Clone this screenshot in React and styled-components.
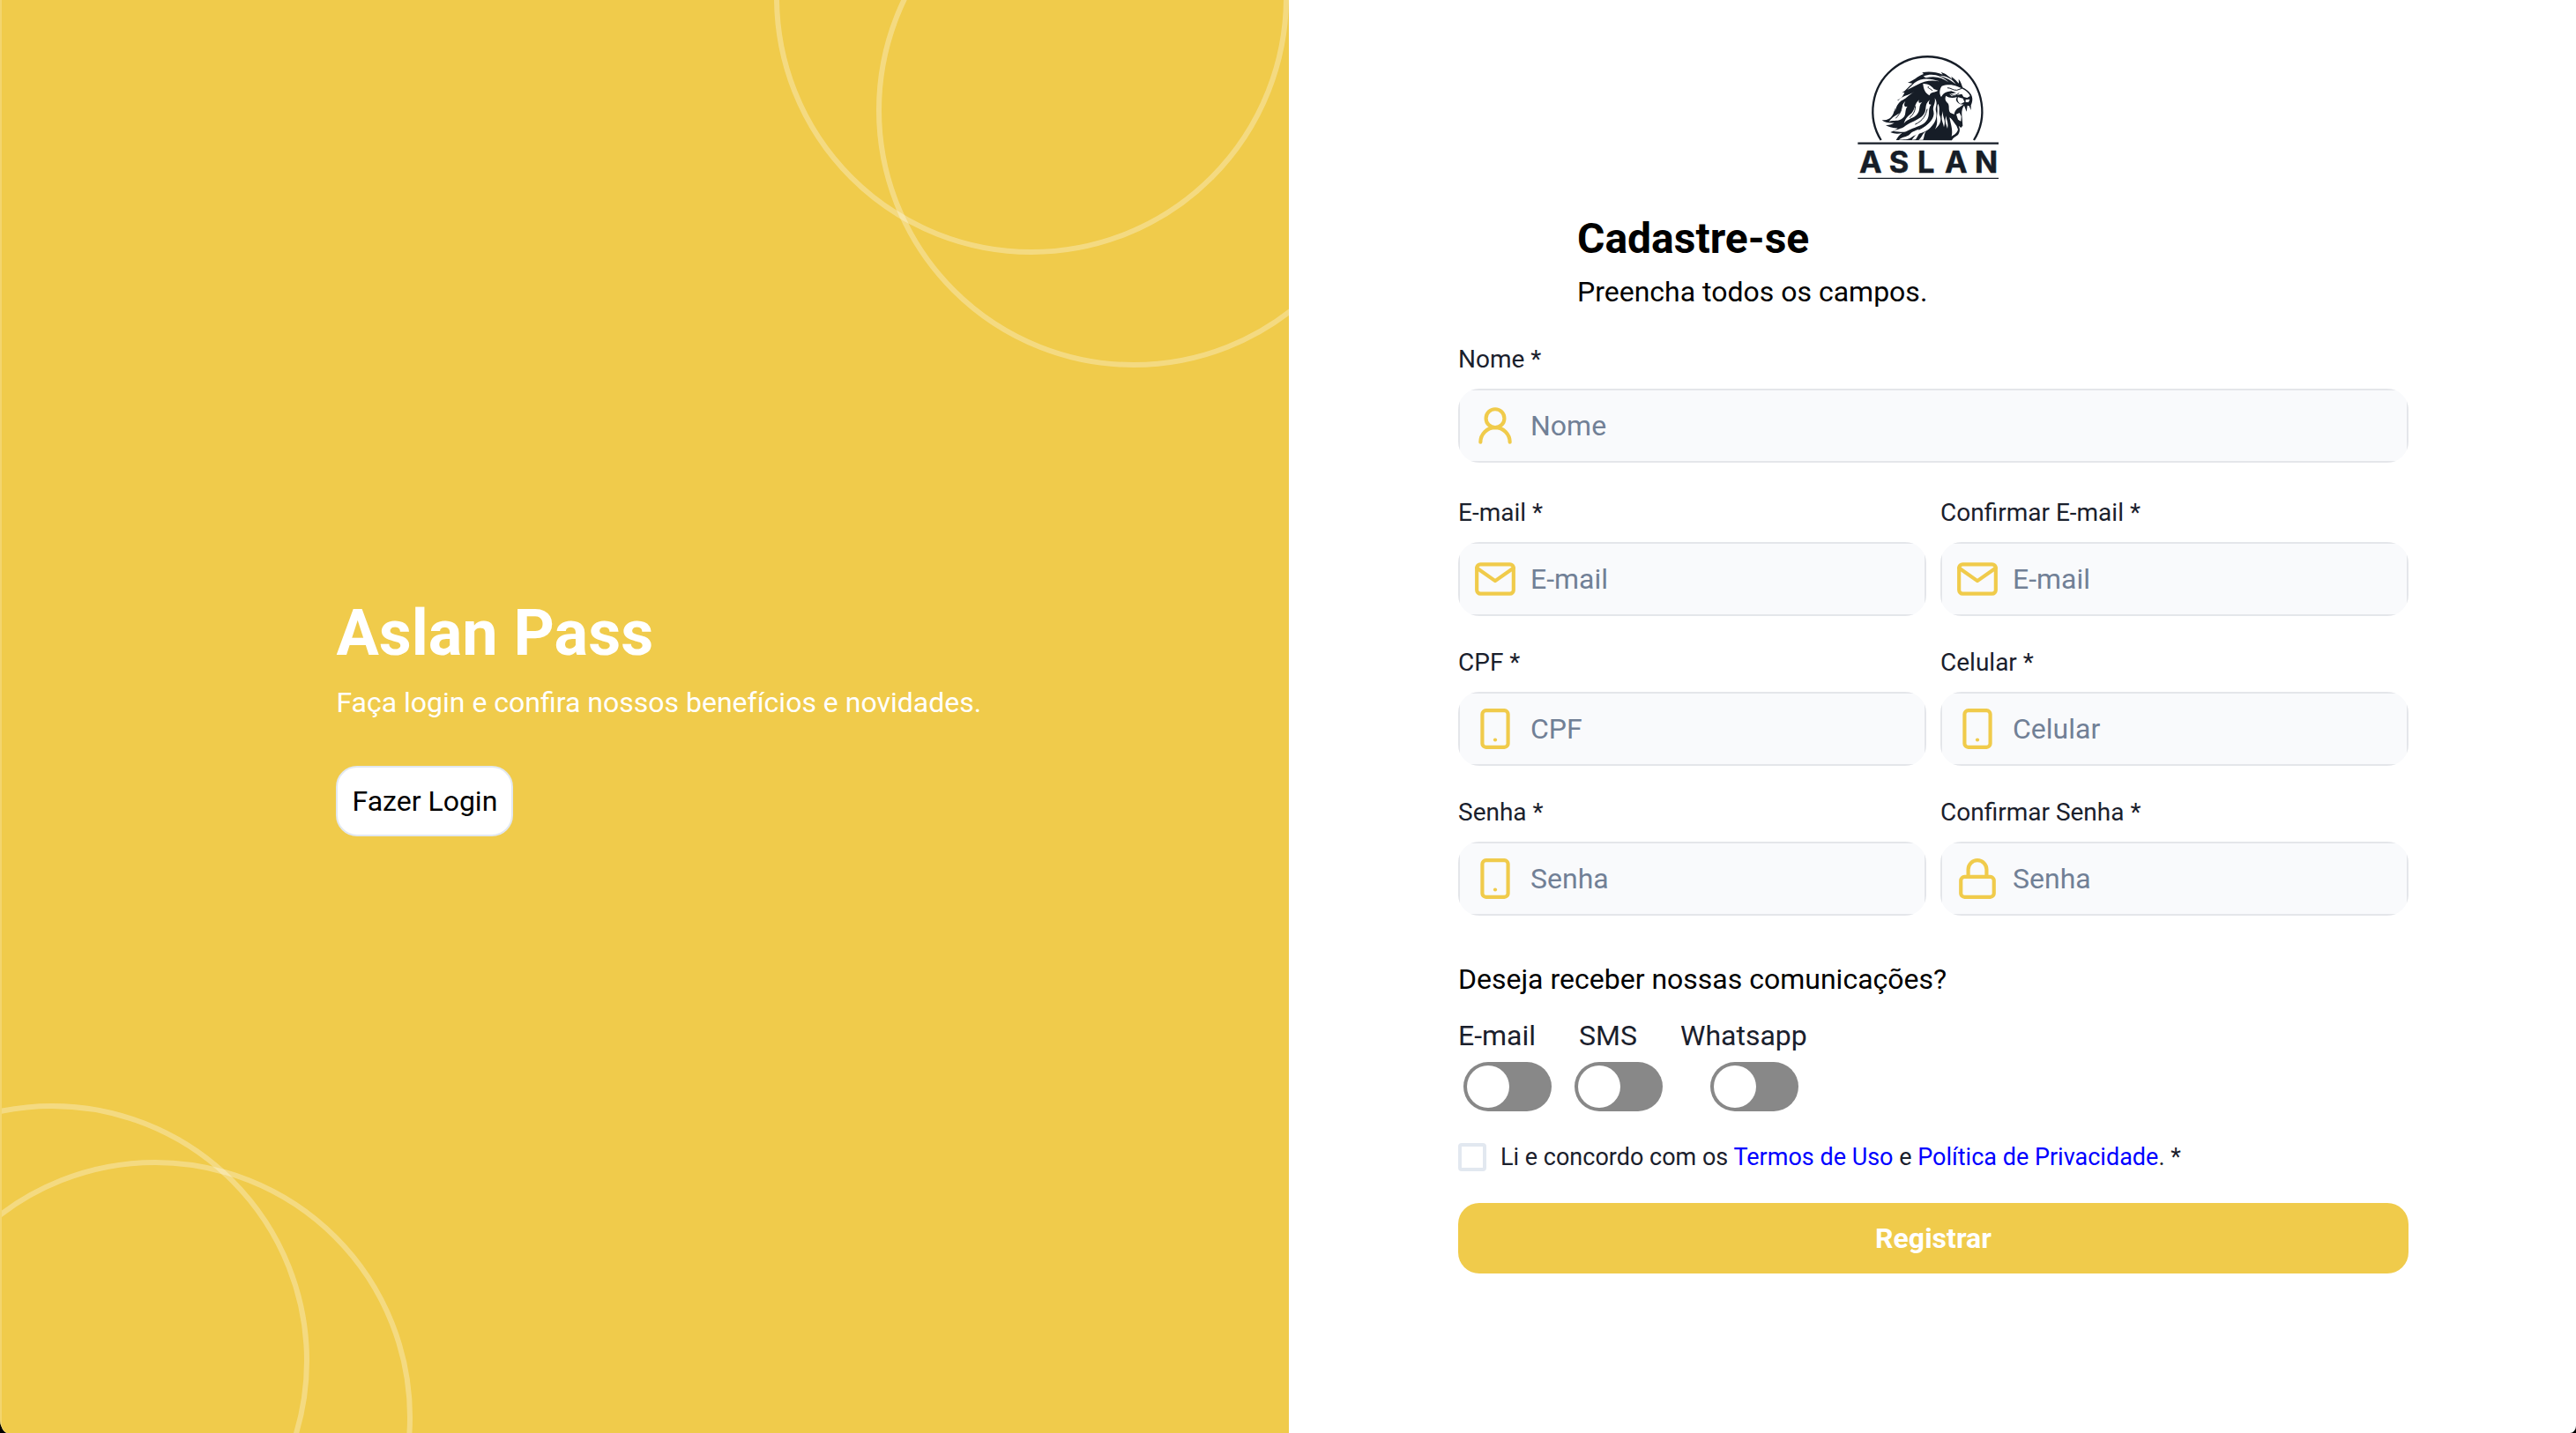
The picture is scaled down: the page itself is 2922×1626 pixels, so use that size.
import React from "react";
import styled, { createGlobalStyle } from "styled-components";
import { FiMail, FiSmartphone, FiLock } from "react-icons/fi";
import { UserRound } from "lucide-react";

const GlobalStyle = createGlobalStyle`
  *, *::before, *::after { box-sizing: border-box; }
  html, body { margin: 0; padding: 0; background: #000; }
  body { font-family: Roboto, "Liberation Sans", sans-serif; color: #1a202c; font-size: 32px; }
  h1, h2, p { margin: 0; }
`;

const Page = styled.main`
  display: grid;
  grid-template-columns: 1462px 1fr;
  width: 2922px;
  height: 1626px;
  overflow: hidden;
  border-radius: 0 0 7px 9px / 0 0 8px 17px;
  background: #fff;
`;

const Hero = styled.section`
  position: relative;
  overflow: hidden;
  background: #f0cb4b;
  border-left: 2px solid #f3d56e;
  padding: 677px 0 0 379.4px;
`;

const Ring = styled.span`
  position: absolute;
  width: 584px;
  height: 584px;
  border: 6px solid rgba(255, 255, 255, 0.3);
  border-radius: 50%;
  left: ${(p) => p.$cx - 294}px;
  top: ${(p) => p.$cy - 292}px;
`;

const HeroTitle = styled.h1`
  color: #fff;
  font-size: 72px;
  font-weight: 700;
  line-height: 84px;
`;

const HeroText = styled.p`
  color: #fff;
  line-height: 38px;
  margin-top: 17px;
`;

const LoginButton = styled.button`
  display: block;
  width: 201px;
  height: 80px;
  margin-top: 53px;
  padding: 0;
  border: 2px solid #e2e8f0;
  border-radius: 24px;
  background: #fff;
  color: #000;
  font: inherit;
`;

const Panel = styled.section`
  display: flex;
  flex-direction: column;
  padding: 62px 190px 0 192px;
`;

const Logo = styled.svg`
  width: 164px;
  height: 144px;
  margin-left: 452px;
`;

const Heading = styled.h2`
  margin: 37px 0 0 135px;
  color: #000;
  font-size: 48px;
  font-weight: 700;
  line-height: 56px;
`;

const Subheading = styled.p`
  margin: 13px 0 0 135px;
  color: #000;
  line-height: 38px;
`;

const FieldGrid = styled.div`
  display: grid;
  grid-template-columns: 531px 531px;
  column-gap: 16px;
  row-gap: 36px;
  margin-top: 41px;
`;

const Field = styled.label`
  display: flex;
  flex-direction: column;
  grid-column: ${(p) => (p.$wide ? "1 / -1" : "auto")};
  margin-bottom: ${(p) => (p.$wide ? "4px" : "0")};
`;

const FieldLabel = styled.span`
  font-size: 28px;
  line-height: 34px;
  margin-bottom: 16px;
`;

const InputShell = styled.span`
  display: block;
  height: 84px;
  border-radius: 24px;
  overflow: hidden;
`;

const InputBox = styled.span`
  display: flex;
  align-items: center;
  height: 100%;
  padding-left: 15px;
  border: 2px solid #e4e6ea;
  background: #f9fafc;
  color: #f0cb4b;
`;

const Input = styled.input`
  flex: 1;
  min-width: 0;
  height: 100%;
  margin: 0 0 0 15px;
  padding: 0;
  border: 0;
  outline: 0;
  background: transparent;
  font: inherit;
  color: #1a202c;
  &::placeholder { color: #718096; opacity: 1; }
`;

const Question = styled.p`
  margin-top: 53px;
  color: #000;
  line-height: 38px;
`;

const SwitchRow = styled.div`
  display: flex;
  margin-top: 26px;
`;

const SwitchItem = styled.div`
  display: flex;
  flex-direction: column;
  width: ${(p) => p.$width}px;
  padding-left: ${(p) => p.$indent || 0}px;
`;

const SwitchLabel = styled.span`
  line-height: 38px;
  margin-bottom: 11px;
`;

const Track = styled.button`
  display: flex;
  width: 100px;
  height: 56px;
  margin: 0 0 0 ${(p) => p.$shift}px;
  padding: 4px;
  border: 0;
  border-radius: 28px;
  background: #888;
`;

const Knob = styled.span`
  width: 48px;
  height: 48px;
  border-radius: 50%;
  background: #fff;
`;

const Consent = styled.label`
  display: flex;
  align-items: center;
  gap: 16px;
  height: 32px;
  margin-top: 36px;
  font-size: 27px;
  white-space: pre;
`;

const Checkbox = styled.span`
  width: 32px;
  height: 32px;
  border: 4px solid #e2e8f0;
  border-radius: 4px;
`;

const Link = styled.a`
  color: #00f;
  text-decoration: none;
`;

const Submit = styled.button`
  height: 80px;
  margin-top: 36px;
  padding: 0;
  border: 0;
  border-radius: 24px;
  background: #f0cb4b;
  color: #fff;
  font: inherit;
  font-weight: 700;
`;

const icons = {
  user: <UserRound size={50} strokeWidth={2} />,
  mail: <FiMail size={50} />,
  phone: <FiSmartphone size={50} />,
  lock: <FiLock size={50} />,
};

const fields = [
  { label: "Nome *", hint: "Nome", icon: "user", wide: true },
  { label: "E-mail *", hint: "E-mail", icon: "mail" },
  { label: "Confirmar E-mail *", hint: "E-mail", icon: "mail" },
  { label: "CPF *", hint: "CPF", icon: "phone" },
  { label: "Celular *", hint: "Celular", icon: "phone" },
  { label: "Senha *", hint: "Senha", icon: "phone" },
  { label: "Confirmar Senha *", hint: "Senha", icon: "lock" },
];

const switches = [
  { label: "E-mail", width: 132, indent: 0, shift: 6 },
  { label: "SMS", width: 120, indent: 5, shift: -5 },
  { label: "Whatsapp", width: 150, indent: 0, shift: 34 },
];

// Drawn in thirds of a pixel: the viewBox is three times the rendered size.
function AslanLogo() {
  return (
    <Logo viewBox="80 36 492 432" role="img" aria-label="Aslan">
      <g fill="none" stroke="#161d27">
        <path d="M163 327A186 186 0 1 1 479 327" strokeWidth="7" />
        <path d="M84 338H563" strokeWidth="7" />
        <path d="M84 457H563" strokeWidth="4" />
      </g>
      <path
        fill="#161d27"
        d="M166 259C186 260 198 252 205 236C211 220 214 208 225 197L219 190C232 185 238 178 243 164L234 166C249 157 256 145 270 134L254 131C276 124 286 110 308 102L303 97C326 92 350 95 373 104L367 95C386 102 395 111 405 119L402 110C416 120 422 128 428 134L427 119C435 128 437 138 441 148C452 153 462 161 469 171C476 182 475 197 469 208L469 225L463 211L457 209L454 230L446 209C440 216 437 227 438 240L441 278L435 285L427 278C434 292 430 302 424 310C415 317 407 320 404 328L214 327C220 315 226 309 235 302C222 307 208 306 195 300C206 297 214 292 220 286C203 287 188 282 179 276C190 277 200 274 208 268C192 270 176 267 166 259Z"
      />
      <g fill="#fff">
        <path d="M370 143C386 137 407 137 422 144L438 151C450 158 462 166 466 177L456 183L444 180L438 170L420 174L404 178L396 170L419 166L402 160L388 163C380 164 372 172 368 180C360 169 362 153 370 143Z" />
        <path d="M384 176C394 184 410 184 421 180L418 190C422 202 434 208 445 205L430 215C418 221 414 228 412 239L399 234C390 224 398 211 390 201C383 194 379 187 384 176Z" />
        <path d="M425 181L442 185L447 197L434 204C425 199 421 190 425 181ZM451 189L465 188L461 198L451 198Z" />
        <path d="M396 250C407 256 412 270 420 278L425 291C421 304 412 309 403 314C408 298 402 277 396 250Z" />
        <path d="M419 239L430 234L436 246L435 263L425 257Z" />
        <path d="M306 135C323 134 335 143 343 153L357 158C348 166 332 160 328 175C314 168 307 153 306 135Z" />
        <path d="M277 132C302 112 332 117 362 127C331 121 309 126 286 139L252 156Z" />
        <path d="M307 110C334 98 368 105 393 130C370 113 345 108 316 115Z" />
        <path d="M362 107C387 108 407 119 418 138C400 121 384 115 362 107Z" />
        <path d="M222 191C236 177 251 176 277 163C257 173 245 189 232 193C220 202 214 214 211 229C211 215 213 203 222 191Z" />
        <path d="M246 194C229 209 236 229 223 237C206 247 198 253 190 264C209 258 221 265 236 253C252 240 241 227 253 212C240 216 240 205 246 194Z" />
        <path d="M293 190C276 202 279 225 266 236C252 247 246 254 241 270C255 253 276 252 285 240C299 224 289 210 303 197C290 204 289 198 293 190Z" />
        <path d="M329 190C307 207 322 226 306 242C291 259 264 264 246 278C230 291 217 288 205 297C226 297 240 304 254 295C275 282 302 280 316 263C334 242 319 222 334 206C323 207 325 199 329 190Z" />
        <path d="M346 184C350 203 336 213 342 230C346 249 330 268 312 280C290 294 273 294 262 306C249 319 234 315 224 326C241 324 254 327 266 318C287 302 312 305 330 286C352 265 354 243 350 229C346 213 359 204 346 184Z" />
        <path d="M357 203C366 220 357 232 364 246C371 265 358 280 347 290C359 267 351 253 354 239C357 224 352 214 357 203ZM374 228C370 249 386 257 377 283C374 264 364 256 374 228ZM385 244C384 258 394 266 389 288C385 272 378 263 385 244Z" />
        <path d="M297 301C282 304 277 316 268 326L281 325C288 316 289 307 297 301ZM316 297C302 305 305 316 291 326L306 326C312 313 309 307 316 297Z" />
      </g>
      <g fill="none" stroke="#161d27" strokeWidth="3" strokeLinecap="round">
        <path d="M324 145C318 151 334 151 337 158M390 149C403 149 406 158 421 157L438 151M400 171C410 178 420 175 428 167" />
        <path d="M214 252C227 237 232 230 234 211M261 250C276 237 279 225 280 212M280 273C306 261 316 241 320 222M292 291C322 277 337 256 340 238" />
      </g>
      <text
        x="89 190 287 380 482"
        y="437"
        fill="#161d27"
        stroke="#161d27"
        strokeWidth="1.5"
        fontFamily="Inter, 'Liberation Sans', sans-serif"
        fontWeight="700"
        fontSize="103"
      >
        ASLAN
      </text>
    </Logo>
  );
}

export default function App() {
  return (
    <>
      <GlobalStyle />
      <Page>
        <Hero>
          <Ring $cx={1170} $cy={-3} />
          <Ring $cx={1286} $cy={125} />
          <Ring $cx={59} $cy={1544} />
          <Ring $cx={176} $cy={1608} />
          <HeroTitle>Aslan Pass</HeroTitle>
          <HeroText>Faça login e confira nossos benefícios e novidades.</HeroText>
          <LoginButton type="button">Fazer Login</LoginButton>
        </Hero>
        <Panel>
          <AslanLogo />
          <Heading>Cadastre-se</Heading>
          <Subheading>Preencha todos os campos.</Subheading>
          <FieldGrid>
            {fields.map((f) => (
              <Field key={f.label} $wide={f.wide}>
                <FieldLabel>{f.label}</FieldLabel>
                <InputShell>
                  <InputBox>
                    {icons[f.icon]}
                    <Input placeholder={f.hint} />
                  </InputBox>
                </InputShell>
              </Field>
            ))}
          </FieldGrid>
          <Question>Deseja receber nossas comunicações?</Question>
          <SwitchRow>
            {switches.map((s) => (
              <SwitchItem key={s.label} $width={s.width} $indent={s.indent}>
                <SwitchLabel>{s.label}</SwitchLabel>
                <Track type="button" role="switch" aria-checked="false" $shift={s.shift}>
                  <Knob />
                </Track>
              </SwitchItem>
            ))}
          </SwitchRow>
          <Consent>
            <Checkbox />
            <span>
              Li e concordo com os <Link>Termos de Uso</Link> e <Link>Política de Privacidade</Link>. *
            </span>
          </Consent>
          <Submit type="button">Registrar</Submit>
        </Panel>
      </Page>
    </>
  );
}
